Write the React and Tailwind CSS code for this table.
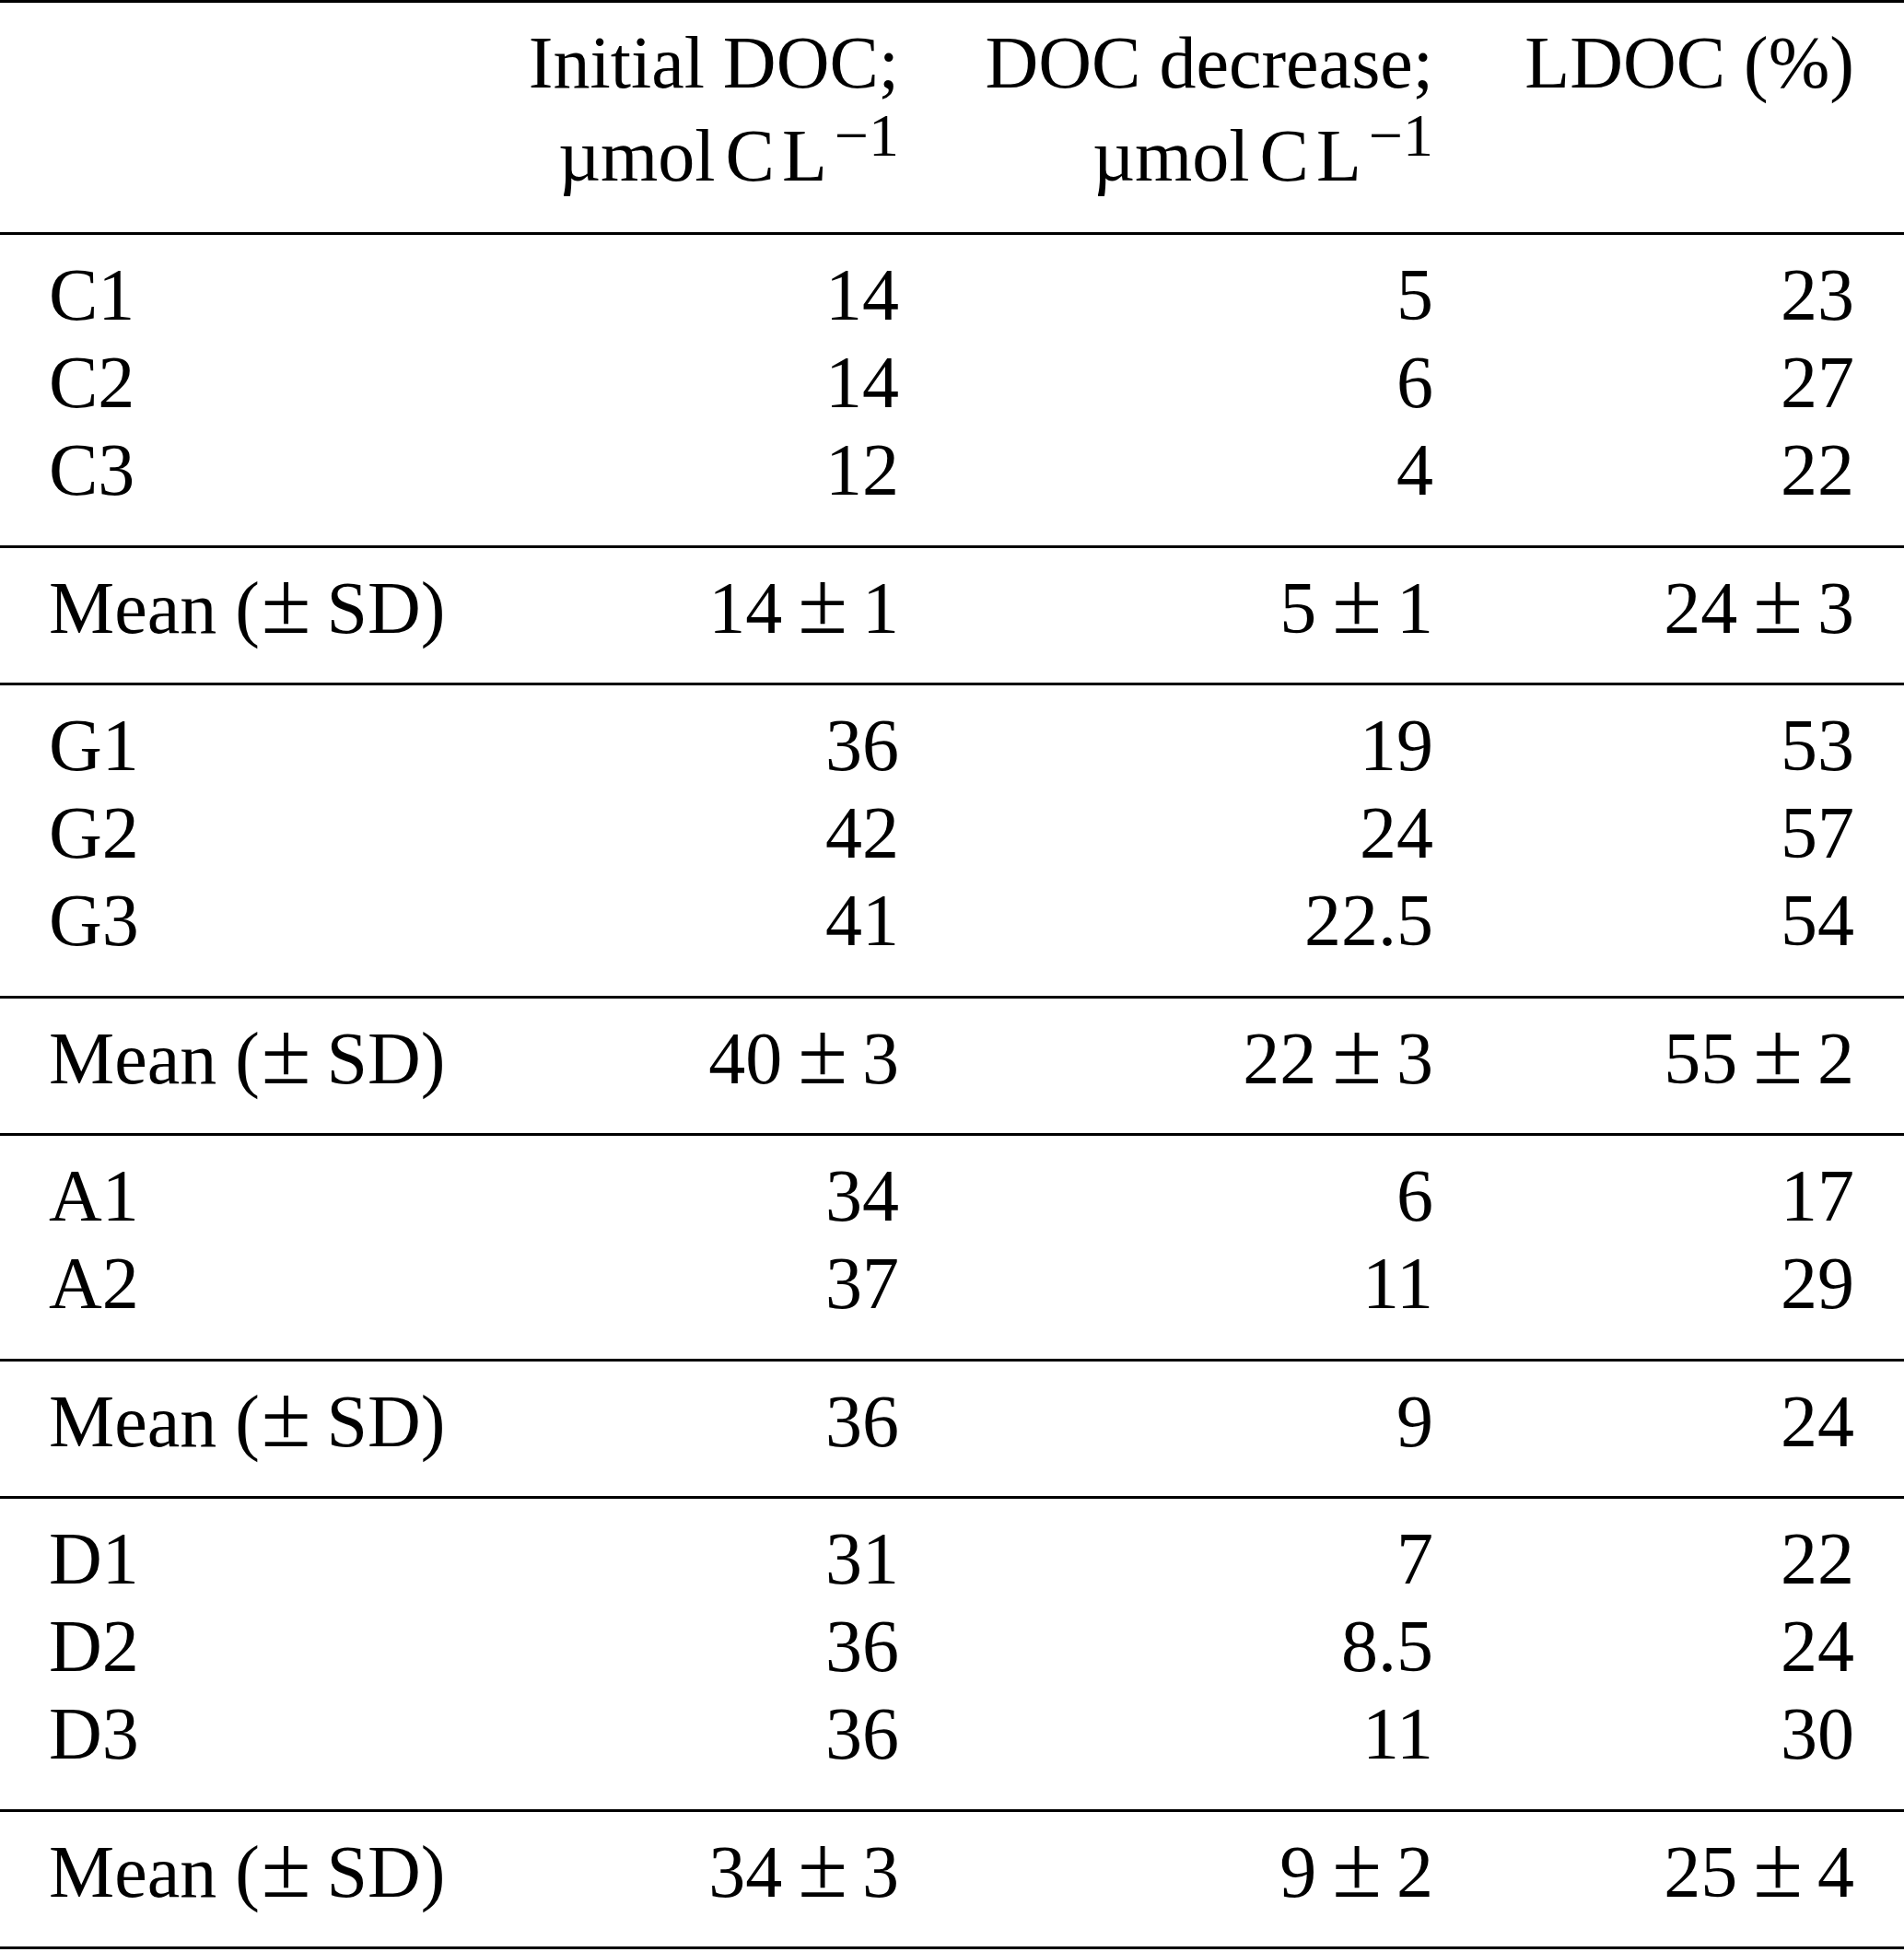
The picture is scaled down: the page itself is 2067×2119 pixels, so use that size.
import React from 'react';

// DOC incubation summary table
const COLS = 'grid grid-cols-[422px_501px_580px_457px] pl-[53px] pr-[54px]';

const groups = [
  {
    rows: [
      ['C1', '14', '5', '23'],
      ['C2', '14', '6', '27'],
      ['C3', '12', '4', '22'],
    ],
    mean: [['14', '1'], ['5', '1'], ['24', '3']],
  },
  {
    rows: [
      ['G1', '36', '19', '53'],
      ['G2', '42', '24', '57'],
      ['G3', '41', '22.5', '54'],
    ],
    mean: [['40', '3'], ['22', '3'], ['55', '2']],
  },
  {
    rows: [
      ['A1', '34', '6', '17'],
      ['A2', '37', '11', '29'],
    ],
    mean: [['36'], ['9'], ['24']],
  },
  {
    rows: [
      ['D1', '31', '7', '22'],
      ['D2', '36', '8.5', '24'],
      ['D3', '36', '11', '30'],
    ],
    mean: [['34', '3'], ['9', '2'], ['25', '4']],
  },
];

const Rule = () => <div className="h-[3px] bg-black" />;

const PlusMinus = ({ className = 'ml-[17px] mr-[16px]' }) => (
  <span className={`text-[98px] leading-[0px] ${className}`}>±</span>
);

const Value = ({ parts }) => {
  if (parts.length === 1) return <>{parts[0]}</>;
  return (
    <>
      {parts[0]}
      <PlusMinus />
      {parts[1]}
    </>
  );
};

const Unit = () => (
  <span className="whitespace-nowrap">
    µmol<span className="ml-[11px]">C</span>
    <span className="ml-[8px]">L</span>
    <sup className="ml-[8px] text-[66px] top-[-27px]">−1</sup>
  </span>
);

const Header = () => (
  <div className={`${COLS} pt-[15px] pb-[32px] leading-[101px] whitespace-nowrap`}>
    <div />
    <div className="text-right">
      <div>Initial DOC;</div>
      <div>
        <Unit />
      </div>
    </div>
    <div className="text-right">
      <div>DOC decrease;</div>
      <div>
        <Unit />
      </div>
    </div>
    <div className="text-right">
      <div>LDOC (%)</div>
    </div>
  </div>
);

const Row = ({ cells }) => (
  <div className={`${COLS} leading-[95px] whitespace-nowrap`}>
    <div>{cells[0]}</div>
    <div className="text-right">{cells[1]}</div>
    <div className="text-right">{cells[2]}</div>
    <div className="text-right">{cells[3]}</div>
  </div>
);

const MeanRow = ({ mean }) => (
  <div className={`${COLS} leading-[95px] whitespace-nowrap`}>
    <div>
      Mean (<PlusMinus className="ml-[2px] mr-[17px]" />SD)
    </div>
    {mean.map((parts, i) => (
      <div key={i} className="text-right">
        <Value parts={parts} />
      </div>
    ))}
  </div>
);

export default function App() {
  return (
    <div className="min-h-screen w-full bg-white font-['Liberation_Serif',serif] text-[80px] text-black">
      <Rule />
      <Header />
      <Rule />
      {groups.map((group, gi) => (
        <React.Fragment key={gi}>
          <div className="pt-[18px] pb-[34px]">
            {group.rows.map((cells) => (
              <Row key={cells[0]} cells={cells} />
            ))}
          </div>
          <Rule />
          <div className="pt-[18px] pb-[33px]">
            <MeanRow mean={group.mean} />
          </div>
          <Rule />
        </React.Fragment>
      ))}
    </div>
  );
}
